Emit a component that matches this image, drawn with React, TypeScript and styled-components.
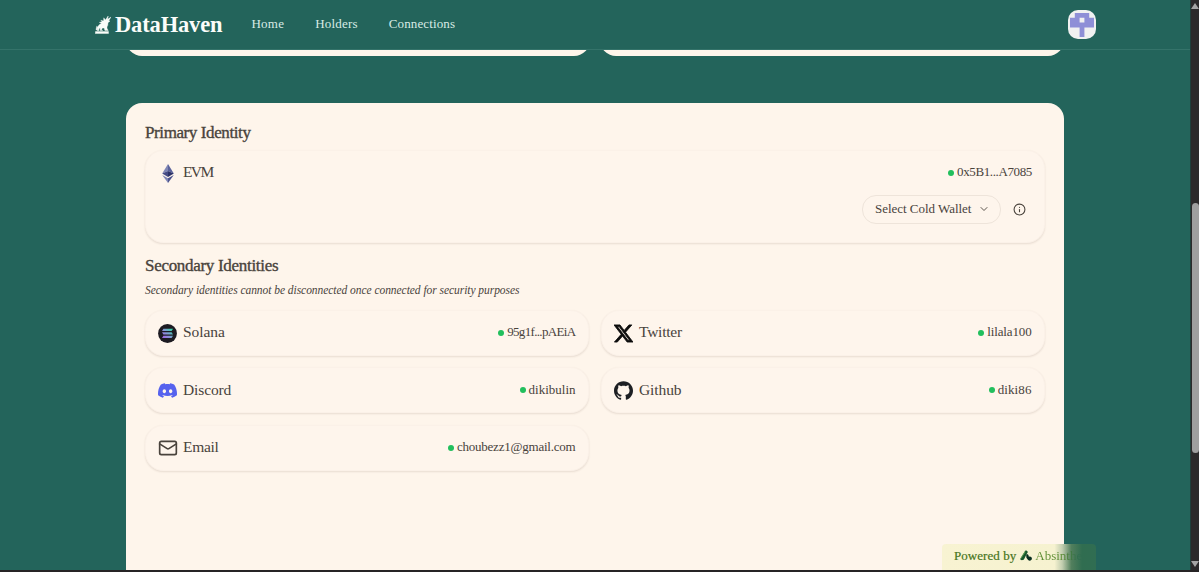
import React from 'react';
import styled, { createGlobalStyle } from 'styled-components';
import { ChevronDown, Info, Mail } from 'lucide-react';
import { SiDiscord, SiGithub, SiX } from 'react-icons/si';

const Global = createGlobalStyle`
  * { box-sizing: border-box; }
  body { margin: 0; background: #23645b; font-family: "Liberation Serif", "Times New Roman", serif; color: #49433c; overflow: hidden; }
  svg { display: block; flex: none; }
`;

const Window = styled.div`display: flex; flex-direction: column; height: 572px; background: #262425;`;
const Body = styled.div`display: flex; height: 570px;`;
const Page = styled.div`position: relative; flex: 1; display: flex; flex-direction: column; background: #23645b; overflow: hidden;`;

const Nav = styled.header`
  flex: none; display: flex; align-items: center; height: 50px; padding: 0 94px 0 95px;
  border-bottom: 1px solid #34736a;
`;
const Brand = styled.div`display: flex; align-items: center; width: 156.5px; padding-bottom: 1px;`;
const Label = styled.span<{ $size: number; $spacing?: number; $weight?: number }>`
  font-size: ${p => p.$size}px;
  letter-spacing: ${p => p.$spacing ?? 0}px;
  font-weight: ${p => p.$weight ?? 400};
  line-height: 20px;
  white-space: nowrap;
`;
const BrandName = styled(Label)`color: #fbfdfa; margin-left: 4px; margin-top: 2px;`;
const Links = styled.nav`display: flex; gap: 31px; color: #d8ebe5; flex: 1; padding-bottom: 1px;`;
const Avatar = styled.div`
  display: grid; place-items: center; width: 28px; height: 29px; border-radius: 10px; background: #f0f1f1;
`;

const Main = styled.main`flex: 1; width: 938px; margin-left: 126px; display: flex; flex-direction: column;`;
const StatRow = styled.div`display: flex; gap: 10px; height: 6px; overflow: hidden; align-items: flex-end;`;
const StatCard = styled.div`flex: 1; height: 60px; border-radius: 16px; background: #fef5eb;`;
const Panel = styled.section`
  margin-top: 47px; flex: 1; padding: 20px 19px 0; border-radius: 16px 16px 0 0; background: #fef5eb;
`;
const Heading = styled.h2<{ $spacing: number }>`
  margin: 0; font-size: 17px; font-weight: 400; line-height: 20px; letter-spacing: ${p => p.$spacing}px; -webkit-text-stroke: 0.35px #49433c;
`;
const Note = styled.p`
  margin: 4px 0 9.5px; font-size: 11.5px; font-style: italic; line-height: 20px; letter-spacing: -0.05px; color: #49433c;
`;
const Card = styled.div`
  border-radius: 18px; background: #fef5ec; border: 1px solid #fbf1e8;
  box-shadow: 0 1px 2px rgba(70, 50, 30, 0.12);
`;
const PrimaryCard = styled(Card)`height: 93px; margin: 7px 0 13px; padding: 11px 12px 0 12px;`;
const Row = styled.div`display: flex; align-items: center; justify-content: space-between; height: 20px;`;
const Grid = styled.div`display: grid; grid-template-columns: 1fr 1fr; gap: 11.7px 12px; grid-auto-rows: 46px;`;
const IdentityCard = styled(Card)`display: flex; align-items: center; justify-content: space-between; padding: 0 12.5px 1px 12px;`;
const Provider = styled.div`display: flex; align-items: center; gap: 5.5px;`;
const IconSlot = styled.span`display: grid; place-items: center; width: 20px; height: 20px; margin: 2px 0 0 -0.5px; color: #1d1f23;`;
const Status = styled.div`display: flex; align-items: center; gap: 3px;`;
const Dot = styled.i`width: 6px; height: 6px; border-radius: 50%; background: #22bf5d; margin-top: 1px;`;
const Actions = styled.div`display: flex; align-items: center; justify-content: flex-end; gap: 12px; padding: 13px 6px 0 0;`;
const Select = styled.button`
  display: flex; align-items: center; justify-content: space-between; width: 139px; height: 29px; padding: 0 10px 1px 12px;
  border: 1px solid #eee4da; border-radius: 14px; background: transparent; color: #49433c; font-family: inherit;
`;

const Powered = styled.div`
  position: absolute; left: 942px; bottom: 0; display: flex; align-items: center; width: 154px; height: 26px; padding: 0 0 3px 12px;
  border-radius: 4px 4px 0 0; color: #47751c; overflow: hidden; -webkit-text-stroke: 0.2px #47751c;
  background: linear-gradient(90deg, #f8f3d2 0%, #f6f2d0 73%, #c3ceb0 78%, #527f5d 84%, #306d50 91%, #306d52 100%);
`;
const Faded = styled(Label)`
  margin-left: 3px; -webkit-text-stroke: 0; color: transparent; background: linear-gradient(90deg, #5d8d32 55%, #306d50 92%); background-clip: text; -webkit-background-clip: text;
`;

const Scrollbar = styled.aside`
  display: flex; flex-direction: column; align-items: center; width: 9px; padding-top: 3px; background: #2c2a2b;
  border-left: 1px solid #1f3f3b;
`;
const Arrow = styled.i<{ $down?: boolean }>`
  border: solid transparent; border-width: ${p => (p.$down ? '6px 4px 0' : '0 4px 6px')};
  border-color: ${p => (p.$down ? '#a5a5a5 transparent transparent' : 'transparent transparent #a5a5a5')};
`;
const Thumb = styled.div`width: 7px; height: 250px; margin: 194px 0 108px 1px; border-radius: 4px; background: #9f9f9f;`;

const HavenLogo = () => (
  <svg width="16" height="19" viewBox="0 0 16 19" fill="#fbfdfa" stroke="#fbfdfa" strokeWidth=".4">
    <path d="M.5 16.5h13v2H.2zM2.3 15.8c-.3-3.6 1-6 4.2-7.2L4.4 7.4 7 6.8 5.8 5.2 8.6 6l.2-3.2L10.4 5l2.8-4-.5 3.3L16 2.1l-2.3 3.7 1.3.2-2 1.7-.2 2.6c-.7 1.3-1 1.9-.7 3.2l1.1 2H9.9l-.8-2.6-1.8.1-.7 1.7 1.1.9H5.2l-.1-2.8-1.3 1.3.3 1.4z" />
    <path d="M1 14.8l.7-3.6 1 .8-.5 2.9z" />
  </svg>
);

const Identicon = () => (
  <svg width="24" height="24" viewBox="0 0 5 5">
    <path fill="#8e8fd7" fillRule="evenodd" d="M1 0h3v1h1v2H3v2H2V3H0V1h1zM2 1v1h1V1z" />
  </svg>
);

const Ethereum = () => (
  <svg width="12" height="19" viewBox="0 0 12 19">
    <path fill="#7f86b5" d="M6 0L.2 9.5 6 7z" />
    <path fill="#5a629b" d="M6 0l5.8 9.5L6 7z" />
    <path fill="#454b85" d="M.2 9.5L6 7v6z" />
    <path fill="#2c3268" d="M11.8 9.5L6 7v6z" />
    <path fill="#7f86b5" d="M.2 11L6 14.3V19z" />
    <path fill="#4b528d" d="M11.8 11L6 14.3V19z" />
  </svg>
);

const Solana = () => (
  <svg width="19" height="19" viewBox="0 0 19 19">
    <defs>
      <linearGradient id="sol" x1="4" y1="14" x2="14" y2="5" gradientUnits="userSpaceOnUse">
        <stop stopColor="#a55be8" /><stop offset=".5" stopColor="#8597d4" /><stop offset="1" stopColor="#35d6a8" />
      </linearGradient>
    </defs>
    <circle cx="9.5" cy="9.5" r="9.4" fill="#1d1b22" />
    <path fill="url(#sol)" d="M5.4 4.8h9.6l-1.4 2.3H4zM4 8.3h9.6l1.4 2.3H5.4zM5.4 11.8h9.6l-1.4 2.3H4z" />
  </svg>
);

const AbsintheLogo = () => (
  <svg width="12" height="11" viewBox="0 0 12 11">
    <path fill="#16572b" d="M5.2.8C6.4 0 7.8.8 7.6 2.2L4.2 9c-.8 1.5-3.8 1.6-4 .1z" />
    <path fill="#65a756" d="M5 1.3L.5 8.2l.7.3L5.5 2z" />
    <path fill="#082e20" d="M6.2 4.7c1.2-.8 2.3 0 2.4 1l.3 1c1.5-.5 3 .4 3 1.8 0 2-2.4 2.8-3.8 1.5L6.4 7.8z" />
  </svg>
);

interface IdentityProps {
  icon: React.ReactNode;
  name: string;
  nameSpacing: number;
  value: string;
  valueSpacing: number;
}

const IdentityContent = ({ icon, name, nameSpacing, value, valueSpacing }: IdentityProps) => (
  <>
    <Provider>
      <IconSlot>{icon}</IconSlot>
      <Label $size={15.5} $spacing={nameSpacing}>{name}</Label>
    </Provider>
    <Status>
      <Dot />
      <Label $size={13} $spacing={valueSpacing}>{value}</Label>
    </Status>
  </>
);

const identities: IdentityProps[] = [
  { icon: <Solana />, name: 'Solana', nameSpacing: -0.05, value: '95g1f...pAEiA', valueSpacing: -0.66 },
  { icon: <SiX size={19} color="#0c0c0c" stroke="#0c0c0c" strokeWidth={1} />, name: 'Twitter', nameSpacing: -0.25, value: 'lilala100', valueSpacing: -0.15 },
  { icon: <SiDiscord size={19} color="#5662ee" />, name: 'Discord', nameSpacing: -0.12, value: 'dikibulin', valueSpacing: 0 },
  { icon: <SiGithub size={19} />, name: 'Github', nameSpacing: -0.1, value: 'diki86', valueSpacing: 0.1 },
  { icon: <Mail size={20} strokeWidth={2} color="#49433c" />, name: 'Email', nameSpacing: -0.3, value: 'choubezz1@gmail.com', valueSpacing: -0.22 },
];

export default function App() {
  return (
    <Window>
      <Global />
      <Body>
        <Page>
          <Nav>
            <Brand>
              <HavenLogo />
              <BrandName $size={22.5} $spacing={-0.15} $weight={700}>DataHaven</BrandName>
            </Brand>
            <Links>
              <Label $size={13} $spacing={0.22}>Home</Label>
              <Label $size={13} $spacing={0.2}>Holders</Label>
              <Label $size={13} $spacing={0.13}>Connections</Label>
            </Links>
            <Avatar><Identicon /></Avatar>
          </Nav>
          <Main>
            <StatRow><StatCard /><StatCard /></StatRow>
            <Panel>
              <Heading $spacing={-0.4}>Primary Identity</Heading>
              <PrimaryCard>
                <Row>
                  <IdentityContent icon={<Ethereum />} name="EVM" nameSpacing={-1.6} value="0x5B1...A7085" valueSpacing={-0.37} />
                </Row>
                <Actions>
                  <Select>
                    <Label $size={13} $spacing={-0.03}>Select Cold Wallet</Label>
                    <ChevronDown size={12} strokeWidth={1.8} />
                  </Select>
                  <Info size={13} strokeWidth={2} />
                </Actions>
              </PrimaryCard>
              <Heading $spacing={-0.3}>Secondary Identities</Heading>
              <Note>Secondary identities cannot be disconnected once connected for security purposes</Note>
              <Grid>
                {identities.map(item => (
                  <IdentityCard key={item.name}><IdentityContent {...item} /></IdentityCard>
                ))}
              </Grid>
            </Panel>
          </Main>
          <Powered>
            <Label $size={13} $spacing={0.05}>Powered by</Label>
            <span style={{ width: 4 }} />
            <AbsintheLogo />
            <Faded $size={13}>Absinthe</Faded>
          </Powered>
        </Page>
        <Scrollbar>
          <Arrow /><Thumb /><Arrow $down />
        </Scrollbar>
      </Body>
    </Window>
  );
}
